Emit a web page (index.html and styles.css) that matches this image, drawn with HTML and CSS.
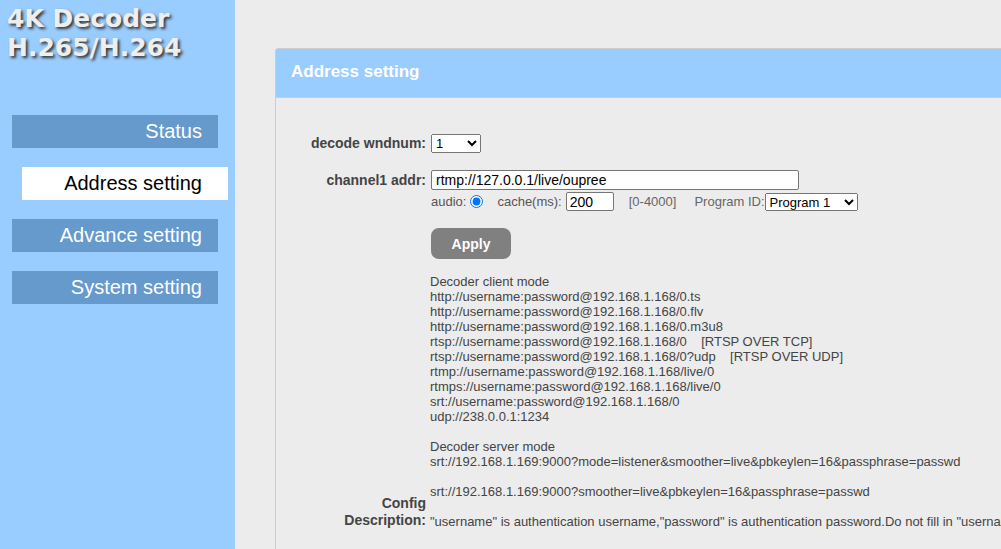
FILE: index.html
```html
<!DOCTYPE html>
<html lang="en">
<head>
    <meta charset="UTF-8">
    <title>4K Decoder</title>
    <link rel="stylesheet" href="styles.css">
</head>
<body>
    <div class="sidebar">
        <h1 class="logo">4K Decoder<br>H.265/H.264</h1>
        <div class="menu">
            <a class="menu-item">Status</a>
            <a class="menu-item active">Address setting</a>
            <a class="menu-item">Advance setting</a>
            <a class="menu-item">System setting</a>
        </div>
    </div>
    <div class="main">
        <div class="panel">
            <div class="panel-head">Address setting</div>
            <table class="form">
                <tr class="row-wnd">
                    <th>decode wndnum:</th>
                    <td>
                        <select class="sel-wnd">
                            <option>1</option>
                            <option>4</option>
                        </select>
                    </td>
                </tr>
                <tr class="row-addr">
                    <th>channel1 addr:</th>
                    <td>
                        <input type="text" class="addr" value="rtmp://127.0.0.1/live/oupree">
                        <div class="sub">
                            <span>audio:</span>
                            <input type="radio" class="radio" checked>
                            <span class="cache-label">cache(ms):</span>
                            <input type="text" class="cache" value="200">
                            <span class="range">[0-4000]</span>
                            <span class="prog">Program ID:</span><select class="sel-prog">
                                <option>Program 1</option>
                                <option>Program 2</option>
                            </select>
                        </div>
                    </td>
                </tr>
                <tr>
                    <th></th>
                    <td><button class="apply">Apply</button></td>
                </tr>
                <tr>
                    <th class="desc-label">Config<br>Description:</th>
                    <td class="desc">
                        Decoder client mode<br>
                        http://username:password@192.168.1.168/0.ts<br>
                        http://username:password@192.168.1.168/0.flv<br>
                        http://username:password@192.168.1.168/0.m3u8<br>
                        rtsp://username:password@192.168.1.168/0&nbsp;&nbsp;&nbsp;&nbsp;[RTSP OVER TCP]<br>
                        rtsp://username:password@192.168.1.168/0?udp&nbsp;&nbsp;&nbsp;&nbsp;[RTSP OVER UDP]<br>
                        rtmp://username:password@192.168.1.168/live/0<br>
                        rtmps://username:password@192.168.1.168/live/0<br>
                        srt://username:password@192.168.1.168/0<br>
                        udp://238.0.0.1:1234<br>
                        <br>
                        Decoder server mode<br>
                        srt://192.168.1.169:9000?mode=listener&amp;smoother=live&amp;pbkeylen=16&amp;passphrase=passwd<br>
                        <br>
                        srt://192.168.1.169:9000?smoother=live&amp;pbkeylen=16&amp;passphrase=passwd<br>
                        <br>
                        "username" is authentication username,"password" is authentication password.Do not fill in "username:password@" if there is no authentication.
                    </td>
                </tr>
            </table>
        </div>
    </div>
</body>
</html>
```

FILE: styles.css
```css
html, body{
    margin: 0;
    height: 100%;
}
body{
    display: flex;
    overflow: hidden;
    background-color: #ececec;
    font-family: "Liberation Sans", Arial, sans-serif;
}
.sidebar{
    width: 235px;
    flex-shrink: 0;
    background-color: #99ccff;
}
.logo{
    margin: 0;
    padding: 4px 0 0 7px;
    font-family: "DejaVu Sans", Verdana, sans-serif;
    font-size: 25px;
    line-height: 29px;
    font-weight: bold;
    color: #eeeeee;
    text-shadow: 2px 2px 3px #333;
}
.menu{
    margin-top: 53px;
    display: flex;
    flex-direction: column;
    gap: 19px;
}
.menu-item{
    display: block;
    width: 190px;
    height: 33px;
    margin-left: 12px;
    padding-right: 16px;
    line-height: 32px;
    text-align: right;
    font-size: 20px;
    color: #fff;
    background-color: #6699cc;
}
.menu-item.active{
    width: 180px;
    margin-left: 22px;
    padding-right: 26px;
    color: #000;
    background-color: #fff;
}
.main{
    flex: 1;
    padding: 48px 0 0 40px;
}
.panel{
    width: 900px;
    height: 600px;
    border: 1px solid #cccccc;
    border-radius: 3px 0 0 0;
}
.panel-head{
    height: 48px;
    line-height: 46px;
    padding-left: 15px;
    background-color: #99ccff;
    border-bottom: 1px solid #cccccc;
    color: #fff;
    font-size: 17px;
    font-weight: bold;
}
.form{
    width: max-content;
    margin: 36px 0 0 28px;
    border-collapse: collapse;
}
.form th{
    width: 122px;
    padding: 0 4px 0 0;
    text-align: right;
    white-space: nowrap;
    font-size: 14px;
    color: #444;
    vertical-align: top;
}
.form td{
    padding: 0;
    font-size: 13px;
    color: #444;
}
.row-wnd th{
    line-height: 19px;
}
.row-addr th{
    padding-top: 17px;
    line-height: 20px;
}
.sel-wnd{
    width: 50px;
    height: 19px;
    font-size: 13px;
    padding: 0;
    margin: 0 0 0 1px;
}
.row-addr td{
    padding-top: 17px;
}
.addr{
    display: block;
    box-sizing: border-box;
    width: 368px;
    height: 20px;
    margin: 0 0 0 1px;
    padding: 1px 4px;
    font-family: "Liberation Sans", Arial, sans-serif;
    font-size: 14px;
    border: 1px solid #767676;
    border-radius: 2px;
}
.sub{
    display: flex;
    align-items: center;
    margin-top: 2px;
    padding-left: 1px;
    color: #555;
}
.radio{
    width: 13px;
    height: 13px;
    margin: 0 14px 0 4px;
}
.cache{
    box-sizing: border-box;
    width: 48px;
    height: 19px;
    margin-left: 4px;
    padding: 1px 3px;
    font-family: "Liberation Sans", Arial, sans-serif;
    font-size: 14px;
    border: 1px solid #767676;
    border-radius: 2px;
}
.range{
    margin-left: 15px;
    color: #666;
}
.prog{
    margin-left: 18px;
    color: #666;
}
.sel-prog{
    width: 93px;
    height: 18px;
    padding: 0;
    font-size: 13px;
}
.apply{
    margin: 17px 0 0 1px;
    width: 80px;
    height: 31px;
    border: none;
    border-radius: 8px;
    background-color: #808080;
    color: #fff;
    font-family: "Liberation Sans", Arial, sans-serif;
    font-size: 14px;
    font-weight: bold;
}
.form th.desc-label{
    vertical-align: bottom;
    line-height: 17px;
}
.form td.desc{
    padding-top: 15px;
    line-height: 15px;
    white-space: nowrap;
}
```
